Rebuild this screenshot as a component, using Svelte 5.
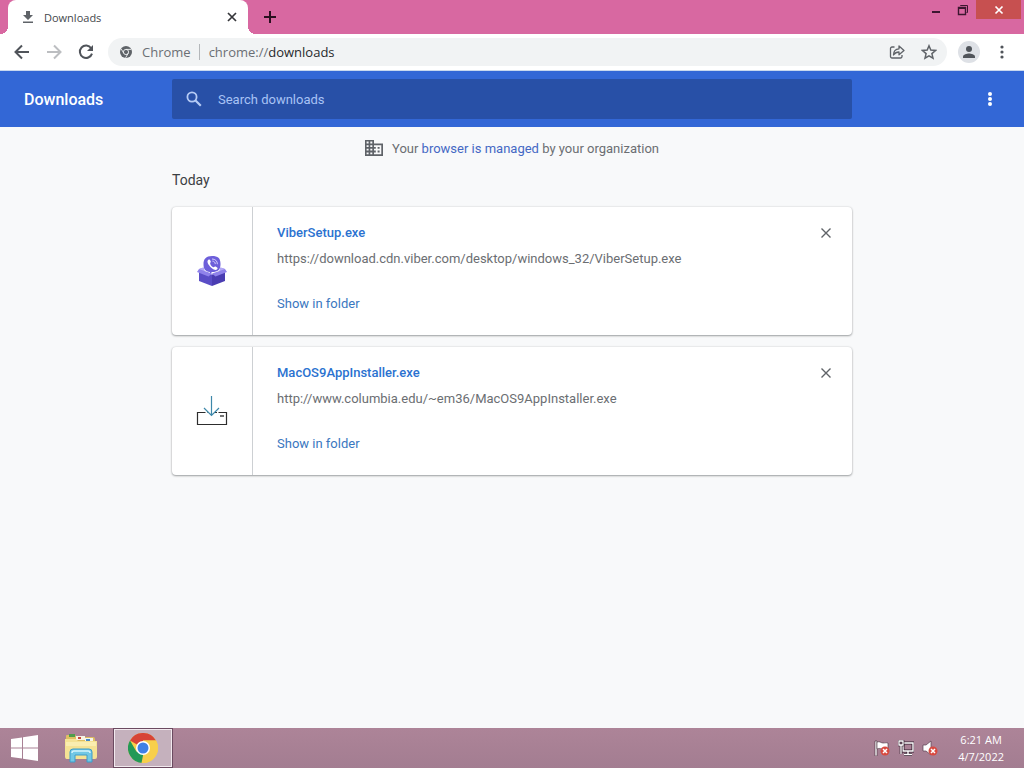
<script>
  let downloads = [
    {
      name: 'ViberSetup.exe',
      url: 'https://download.cdn.viber.com/desktop/windows_32/ViberSetup.exe',
      icon: 'viber'
    },
    {
      name: 'MacOS9AppInstaller.exe',
      url: 'http://www.columbia.edu/~em36/MacOS9AppInstaller.exe',
      icon: 'installer'
    }
  ];

  let search = '';
  let address = 'downloads';

  $: visible = downloads.filter((d) => d.name.toLowerCase().includes(search.toLowerCase()));

  function remove(item) {
    downloads = downloads.filter((d) => d !== item);
  }
</script>

<div class="screen">
  <div class="titlebar">
    <div class="tab">
      <svg class="tab-icon" width="12" height="12" viewBox="0 0 12 12" fill="#5f6368">
        <path d="M4 0h4v4h3L6 9 1 4h3zM1 10.5h10V12H1z" />
      </svg>
      <span class="tab-title">Downloads</span>
      <button class="tab-close" aria-label="Close tab">
        <svg width="10" height="10" viewBox="0 0 10 10" stroke="#35363a" stroke-width="1.7">
          <path d="M1 1l8 8M9 1L1 9" />
        </svg>
      </button>
    </div>
    <button class="new-tab" aria-label="New tab">
      <svg width="12" height="12" viewBox="0 0 12 12" stroke="#2b1020" stroke-width="2">
        <path d="M6 0v12M0 6h12" />
      </svg>
    </button>
    <div class="window-buttons">
      <button class="win" aria-label="Minimize">
        <svg width="12" height="12" viewBox="0 0 12 12" fill="#3c1730"><path d="M2 7h8v2H2z" /></svg>
      </button>
      <button class="win" aria-label="Restore">
        <svg width="12" height="12" viewBox="0 0 12 12" fill="none" stroke="#3c1730">
          <path d="M3.5 2V1.500h7v7H9.500" />
          <path d="M1.500 3.500h7v7h-7z" stroke-width="1.400" />
          <path d="M1 4.500h8" />
        </svg>
      </button>
      <button class="win win-close" aria-label="Close">
        <svg width="10" height="10" viewBox="0 0 10 10" stroke="#fff" stroke-width="1.700">
          <path d="M1.500 1.500l7 7M8.500 1.500l-7 7" />
        </svg>
      </button>
    </div>
  </div>

  <div class="toolbar">
    <button class="tool" aria-label="Back">
      <svg width="16" height="16" viewBox="0 0 16 16" fill="none" stroke="#50545a" stroke-width="2">
        <path d="M15 8H2M8 1.500L1.500 8 8 14.500" />
      </svg>
    </button>
    <button class="tool" aria-label="Forward" disabled>
      <svg width="16" height="16" viewBox="0 0 16 16" fill="none" stroke="#bcbec1" stroke-width="2">
        <path d="M1 8h13M8 1.500L14.500 8 8 14.500" />
      </svg>
    </button>
    <button class="tool" aria-label="Reload">
      <svg width="16" height="16" viewBox="0 0 16 16">
        <path d="M13.200 4.200A6.200 6.200 0 1 0 14 9.600" fill="none" stroke="#50545a" stroke-width="2" />
        <path d="M15 1v6H9z" fill="#50545a" />
      </svg>
    </button>
    <div class="omnibox">
      <svg class="site-icon" width="12" height="12" viewBox="0 0 12 12">
        <circle cx="6" cy="6" r="6" fill="#5f6368" />
        <circle cx="6" cy="6" r="2.600" fill="none" stroke="#f1f3f4" stroke-width="0.900" />
        <path d="M6 3.400h5.200M3.800 7.300L1.200 2.900M8.200 7.300l-2.600 4.500" stroke="#f1f3f4" stroke-width="0.900" />
      </svg>
      <span class="site">Chrome</span>
      <label class="scheme" for="address">chrome://</label>
      <input id="address" class="address" type="text" bind:value={address} />
      <button class="tool" aria-label="Share">
        <svg width="16" height="16" viewBox="0 0 16 16" fill="none" stroke="#5f6368" stroke-width="1.300" stroke-linejoin="round">
          <path d="M5.500 3H3a1.500 1.500 0 0 0-1.500 1.500v8A1.500 1.500 0 0 0 3 14h8.500a1.500 1.500 0 0 0 1.500-1.500V11" />
          <path d="M4.500 11C4.500 7 7 5 10 4.800V2l5 4.500-5 4.300V8C7.500 8 6 8.800 4.500 11z" />
        </svg>
      </button>
      <button class="tool" aria-label="Bookmark this tab">
        <svg width="16" height="16" viewBox="0 0 16 16" fill="none" stroke="#5f6368" stroke-width="1.500">
          <path d="M8 1.800l1.800 4.300 4.700.4-3.600 3.100 1.100 4.600L8 11.800l-4 2.400 1.100-4.600-3.600-3.100 4.700-.4z" />
        </svg>
      </button>
    </div>
    <button class="profile" aria-label="Profile">
      <svg width="12" height="12" viewBox="0 0 12 12" fill="#50545a">
        <circle cx="6" cy="3" r="3" />
        <path d="M0 12v-1.500C0 8.300 4 7.400 6 7.400s6 .9 6 3.100V12z" />
      </svg>
    </button>
    <button class="tool" aria-label="Chrome menu">
      <svg width="4" height="14" viewBox="0 0 4 14" fill="#50545a">
        <circle cx="2" cy="2" r="1.600" /><circle cx="2" cy="7" r="1.600" /><circle cx="2" cy="12" r="1.600" />
      </svg>
    </button>
  </div>

  <header class="header">
    <h1>Downloads</h1>
    <div class="search">
      <svg width="16" height="16" viewBox="0 0 16 16" fill="none" stroke="#b6cbf5" stroke-width="1.800">
        <circle cx="6" cy="6" r="4.600" />
        <path d="M9.500 9.500l5.300 5.300" stroke-width="2.200" />
      </svg>
      <input type="text" aria-label="Search downloads" placeholder="Search downloads" bind:value={search} />
    </div>
    <button class="more" aria-label="More actions">
      <svg width="4" height="14" viewBox="0 0 4 14" fill="#fff">
        <circle cx="2" cy="2" r="2" /><circle cx="2" cy="7" r="2" /><circle cx="2" cy="12" r="2" />
      </svg>
    </button>
  </header>

  <main class="page">
    <div class="managed">
      <svg width="18" height="16" viewBox="0 0 18 16" fill="#5f6368">
        <path fill-rule="evenodd" d="M0 0h9v3.500h9V16H0zM1.600 1.600v1.800h2V1.600zM5.300 1.600v1.800h2V1.600zM1.600 5.200V7h2V5.200zM5.300 5.200V7h2V5.200zM1.600 8.800v1.800h2V8.800zM5.300 8.800v1.800h2V8.800zM1.600 12.400v1.900h2v-1.900zM5.300 12.400v1.900h2v-1.900zM9 5.200V7h1.800v1.800H9v1.800h1.800v1.800H9v1.900h7.300V5.200z" />
        <path d="M12.600 7h2v1.800h-2zM12.600 10.600h2v1.800h-2z" />
      </svg>
      <span>Your <a href="chrome://management">browser is managed</a> by your organization</span>
    </div>

    <h2>Today</h2>

    <div class="list">
      {#each visible as item}
        <div class="card">
          <div class="card-icon">
            {#if item.icon === 'viber'}
              <svg width="32" height="32" viewBox="0 -1 32 32">
                <path d="M16 0c6 0 8.500 2 8.500 8S22 16 16 16l-2 2v-2C9 15.500 7.500 13 7.500 8S10 0 16 0z" fill="#6d5fda" />
                <path d="M12.200 4c1-.9 1.800-.4 2.500 1.200.5 1.300-.9 1.500-.5 2.500.6 1.700 1.700 2.900 3.300 3.500 1 .3 1.200-1.200 2.500-.5 1.800 1 2.100 1.700.9 2.700-1.200 1-2.900.4-5-1.200-2.300-1.800-6-6.200-3.700-8.200z" fill="#fff" />
                <path d="M16 3c3.200 0 5.400 2 5.400 5.200M16.400 5.100c1.800.1 2.900 1.200 2.900 3" fill="none" stroke="#dcd7ff" stroke-width="0.900" />
                <path d="M3 15l13 3.500V30L3 25z" fill="#5a4dc6" />
                <path d="M29 15l-13 3.500V30l13-5z" fill="#4a3db2" />
                <path d="M3 13l4.500-1.500 1 3.500 7.500 2.500-3.500 3L1 16zM29 13l-4.500-1.500-1 3.500-7.500 2.500 3.500 3L31 16z" fill="#8f82ea" />
                <path d="M7.500 11.500L3 13l5.500 2zM24.500 11.500L29 13l-5.500 2z" fill="#b4aaf5" />
              </svg>
            {:else}
              <svg width="32" height="32" viewBox="0 1 32 32" fill="none">
                <path d="M9.500 18.500h-8v12h29v-12h-8M11.500 18.500h1M19 18.500h2" stroke="#2d2d2d" stroke-width="1.200" />
                <path d="M24 22h4" stroke="#444" stroke-width="1.500" />
                <path d="M15.500 2v19M8 14l7.500 7.500L23 14" stroke="#3e88aa" stroke-width="1.200" />
              </svg>
            {/if}
          </div>
          <div class="details">
            <a class="name" href={item.url}>{item.name}</a>
            <a class="url" href={item.url}>{item.url}</a>
            <button class="show">Show in folder</button>
          </div>
          <button class="remove" aria-label="Remove {item.name} from list" on:click={() => remove(item)}>
            <svg width="10" height="10" viewBox="0 0 10 10" stroke="#5f6368" stroke-width="1.400">
              <path d="M.500 .500l9 9M9.500 .500l-9 9" />
            </svg>
          </button>
        </div>
      {/each}
    </div>
  </main>

  <footer class="taskbar">
    <button class="task start" aria-label="Start">
      <svg width="27" height="26" viewBox="0 0 27 26" fill="#fff">
        <path d="M0 4l11-1.600V12.500H0zM12 2.200L27 0v12.500H12zM0 13.500h11v10L0 22zM12 13.500h15V26l-15-2.200z" />
      </svg>
    </button>
    <button class="task" aria-label="File Explorer">
      <svg width="32" height="30" viewBox="0 0 32 30">
        <path d="M1 3q0-1 1-1h8l2 2h16q2 0 2 2v20H1z" fill="#dfbf62" />
        <path d="M4 1h6v3H4z" fill="#4f9d4c" />
        <path d="M11 3h9v4h-9z" fill="#f8f4e4" />
        <path d="M13 4h3v2h-3z" fill="#c74a3d" />
        <path d="M20 5h8v4h-8z" fill="#f6f5ec" />
        <path d="M21 6h4v2h-4z" fill="#4388c6" />
        <path d="M0 6h11l2 2h19v16q0 2-2 2H2q-2 0-2-2z" fill="#f5e294" />
        <path d="M1 9h30v4H1z" fill="#faedb0" />
        <path d="M5 29V19q0-3 3-3h16q3 0 3 3v10h-5v-7H10v7z" fill="#72c8e5" stroke="#3d9cc9" />
        <path d="M7 20q0-2 2-2h14q2 0 2 2" fill="none" stroke="#d3f3fc" stroke-width="1.500" />
      </svg>
    </button>
    <button class="task active" aria-label="Google Chrome">
      <svg width="30" height="30" viewBox="0 0 30 30">
        <circle cx="15" cy="15" r="15" fill="#f8cf4b" />
        <path d="M15 15L2 7.500A15 15 0 0 1 28 7.500H15z" fill="#d74437" />
        <path d="M2 7.500A15 15 0 0 0 15 30l6.500-11.250L15 15 8.500 18.750z" fill="#239957" />
        <path d="M28 7.500H15v15l-1.500 7.400A15 15 0 0 0 28 7.500z" fill="#f8cf4b" />
        <circle cx="15" cy="15" r="7" fill="#fff" />
        <circle cx="15" cy="15" r="5.500" fill="#4080e5" />
      </svg>
    </button>
    <div class="tray">
      <button class="tray-item" aria-label="Action Center">
        <svg width="16" height="16" viewBox="0 0 16 16">
          <path d="M1 1h2v15H1z" fill="#fff" stroke="#3f2937" stroke-width="0.600" />
          <path d="M3 2c3-1 4 1 6 1s3-.5 5 0v6c-3-1-4 .5-6 0s-3-1-5 0z" fill="#fff" stroke="#3f2937" stroke-width="0.600" />
          <circle cx="11" cy="11" r="4.500" fill="#d84a40" />
          <path d="M9 9l4 4M13 9l-4 4" stroke="#fff" stroke-width="1.500" />
        </svg>
      </button>
      <button class="tray-item" aria-label="Network">
        <svg width="16" height="16" viewBox="0 0 16 16" fill="none">
          <path d="M5 3h10v8H5zM10 11v3M6 14.500h8" stroke="#342130" stroke-width="3" />
          <path d="M5 3h10v8H5zM10 11v3M6 14.500h8" stroke="#fff" stroke-width="1.400" />
          <path d="M1 1h4v4H1zM3 5v9" fill="#806579" stroke="#342130" stroke-width="2.600" />
          <path d="M1 1h4v4H1zM3 5v9" stroke="#fff" stroke-width="1.300" />
        </svg>
      </button>
      <button class="tray-item" aria-label="Volume muted">
        <svg width="16" height="16" viewBox="0 0 16 16">
          <path d="M1 5h3l5-4v14l-5-4H1z" fill="#fff" stroke="#594050" stroke-width="0.700" />
          <circle cx="11" cy="11" r="4.500" fill="#d84a40" />
          <path d="M9 9l4 4M13 9l-4 4" stroke="#fff" stroke-width="1.500" />
        </svg>
      </button>
      <time class="clock" datetime="2022-04-07T06:21">
        <span>6:21 AM</span>
        <span>4/7/2022</span>
      </time>
    </div>
  </footer>
</div>

<style>
  :global(body) {
    background: #f8f9fa;
  }

  .screen {
    min-height: 100vh;
    display: flex;
    flex-direction: column;
    font-family: Roboto, sans-serif;
    font-size: 13px;
  }

  button,
  input {
    font: inherit;
    border: none;
    padding: 0;
    background: none;
  }

  button {
    display: flex;
    align-items: center;
    justify-content: center;
    cursor: pointer;
  }

  .titlebar {
    display: flex;
    height: 34px;
    padding-left: 8px;
    background: #d868a1;
    font-family: "Open Sans", sans-serif;
    font-size: 11px;
  }

  .tab {
    position: relative;
    display: flex;
    align-items: center;
    width: 240px;
    box-sizing: border-box;
    padding: 0 8px 0 14px;
    border-radius: 8px 8px 0 0;
    background: #fff;
    color: #45484c;
  }

  .tab::before,
  .tab::after {
    content: '';
    position: absolute;
    bottom: 0;
    width: 8px;
    height: 8px;
  }

  .tab::before {
    right: 100%;
    background: radial-gradient(circle at 0 0, transparent 8px, #fff 8px);
  }

  .tab::after {
    left: 100%;
    background: radial-gradient(circle at 100% 0, transparent 8px, #fff 8px);
  }

  .tab-title {
    flex: 1;
    margin-left: 10px;
  }

  .tab-close {
    width: 16px;
    height: 16px;
  }

  .new-tab {
    width: 28px;
    margin-left: 8px;
  }

  .window-buttons {
    display: flex;
    align-items: flex-start;
    margin-left: auto;
    padding-right: 3px;
  }

  .win {
    width: 27px;
    height: 19px;
  }

  .win-close {
    width: 45px;
    background: #c75050;
  }

  .toolbar {
    display: flex;
    align-items: center;
    height: 36px;
    padding: 0 10px;
    border-bottom: 1px solid #c9d8ef;
    background: #fff;
    font-family: "Open Sans", sans-serif;
    font-size: 13px;
  }

  .tool {
    flex: none;
    width: 24px;
    height: 28px;
  }

  .toolbar > .tool + .tool {
    margin-left: 8px;
  }

  .omnibox {
    flex: 1;
    display: flex;
    align-items: center;
    min-width: 0;
    height: 28px;
    margin-left: 10px;
    padding: 0 6px 0 12px;
    border-radius: 14px;
    background: #f1f3f4;
    color: #6b6f74;
  }

  .site {
    margin: 0 9px 0 10px;
    padding-right: 8px;
    border-right: 1px solid #b4b7ba;
    line-height: 16px;
  }

  .address {
    flex: 1;
    min-width: 0;
    color: #27292c;
    outline: none;
  }

  .omnibox .tool + .tool {
    margin-left: 8px;
  }

  .profile {
    width: 22px;
    height: 22px;
    margin: 0 10px 0 11px;
    border-radius: 50%;
    background: #dee1e6;
  }

  .header {
    display: grid;
    grid-template-columns: 1fr minmax(0, 680px) 1fr;
    align-items: center;
    height: 56px;
    background: #3367d6;
    color: #fff;
  }

  h1 {
    margin: 0;
    padding-left: 24px;
    font-size: 16px;
    font-weight: 500;
  }

  .search {
    display: flex;
    align-items: center;
    height: 40px;
    padding: 0 14px;
    border-radius: 2px;
    background: #2850a7;
  }

  .search input {
    flex: 1;
    min-width: 0;
    margin-left: 16px;
    color: #fff;
    outline: none;
  }

  .search input::placeholder {
    color: #a9c3f5;
    opacity: 1;
  }

  .more {
    justify-self: end;
    width: 28px;
    height: 28px;
    margin-right: 20px;
  }

  .page {
    flex: 1;
    width: 100%;
    max-width: 680px;
    margin: 0 auto;
  }

  .managed {
    display: flex;
    align-items: center;
    justify-content: center;
    gap: 9px;
    height: 42px;
    color: #6b6e72;
  }

  .managed a {
    color: #4468c4;
    text-decoration: none;
  }

  h2 {
    margin: 0 0 16px;
    color: #3c4043;
    font-size: 14px;
    font-weight: 400;
    line-height: 22px;
  }

  .list {
    display: flex;
    flex-direction: column;
    gap: 12px;
  }

  .card {
    display: flex;
    min-height: 128px;
    border-radius: 4px;
    background: #fff;
    box-shadow: 0 1px 2px rgba(60, 64, 67, 0.45), 0 0 2px rgba(60, 64, 67, 0.2);
  }

  .card-icon {
    display: flex;
    align-items: center;
    justify-content: center;
    width: 80px;
    border-right: 1px solid #cdd0d3;
  }

  .details {
    flex: 1;
    min-width: 0;
    display: flex;
    flex-direction: column;
    align-items: flex-start;
    padding: 16px 24px;
    line-height: 20px;
  }

  .details a {
    text-decoration: none;
  }

  .name {
    color: #2b72d0;
    font-weight: 500;
  }

  .url {
    margin-top: 6px;
    color: #6b6e72;
  }

  .show {
    margin-top: 25px;
    color: #3a77c0;
  }

  .remove {
    width: 20px;
    height: 20px;
    margin: 16px 16px 0 0;
  }

  .taskbar {
    display: flex;
    height: 40px;
    background: linear-gradient(#ad8498, #a37d91);
    color: #fff;
  }

  .task {
    width: 60px;
    height: 40px;
  }

  .start {
    width: 48px;
    margin-right: 3px;
  }

  .active {
    margin-left: 2px;
    border: 1px solid #6b4a60;
    background: #c5b1bd;
    box-shadow: inset 0 0 0 1px #f2e9ee;
  }

  .tray {
    display: flex;
    align-items: center;
    margin-left: auto;
    padding-right: 20px;
  }

  .tray-item {
    width: 24px;
    height: 24px;
  }

  .clock {
    display: flex;
    flex-direction: column;
    align-items: center;
    margin-left: 16px;
    font-family: "Open Sans", sans-serif;
    font-size: 11px;
    line-height: 17px;
  }
</style>
